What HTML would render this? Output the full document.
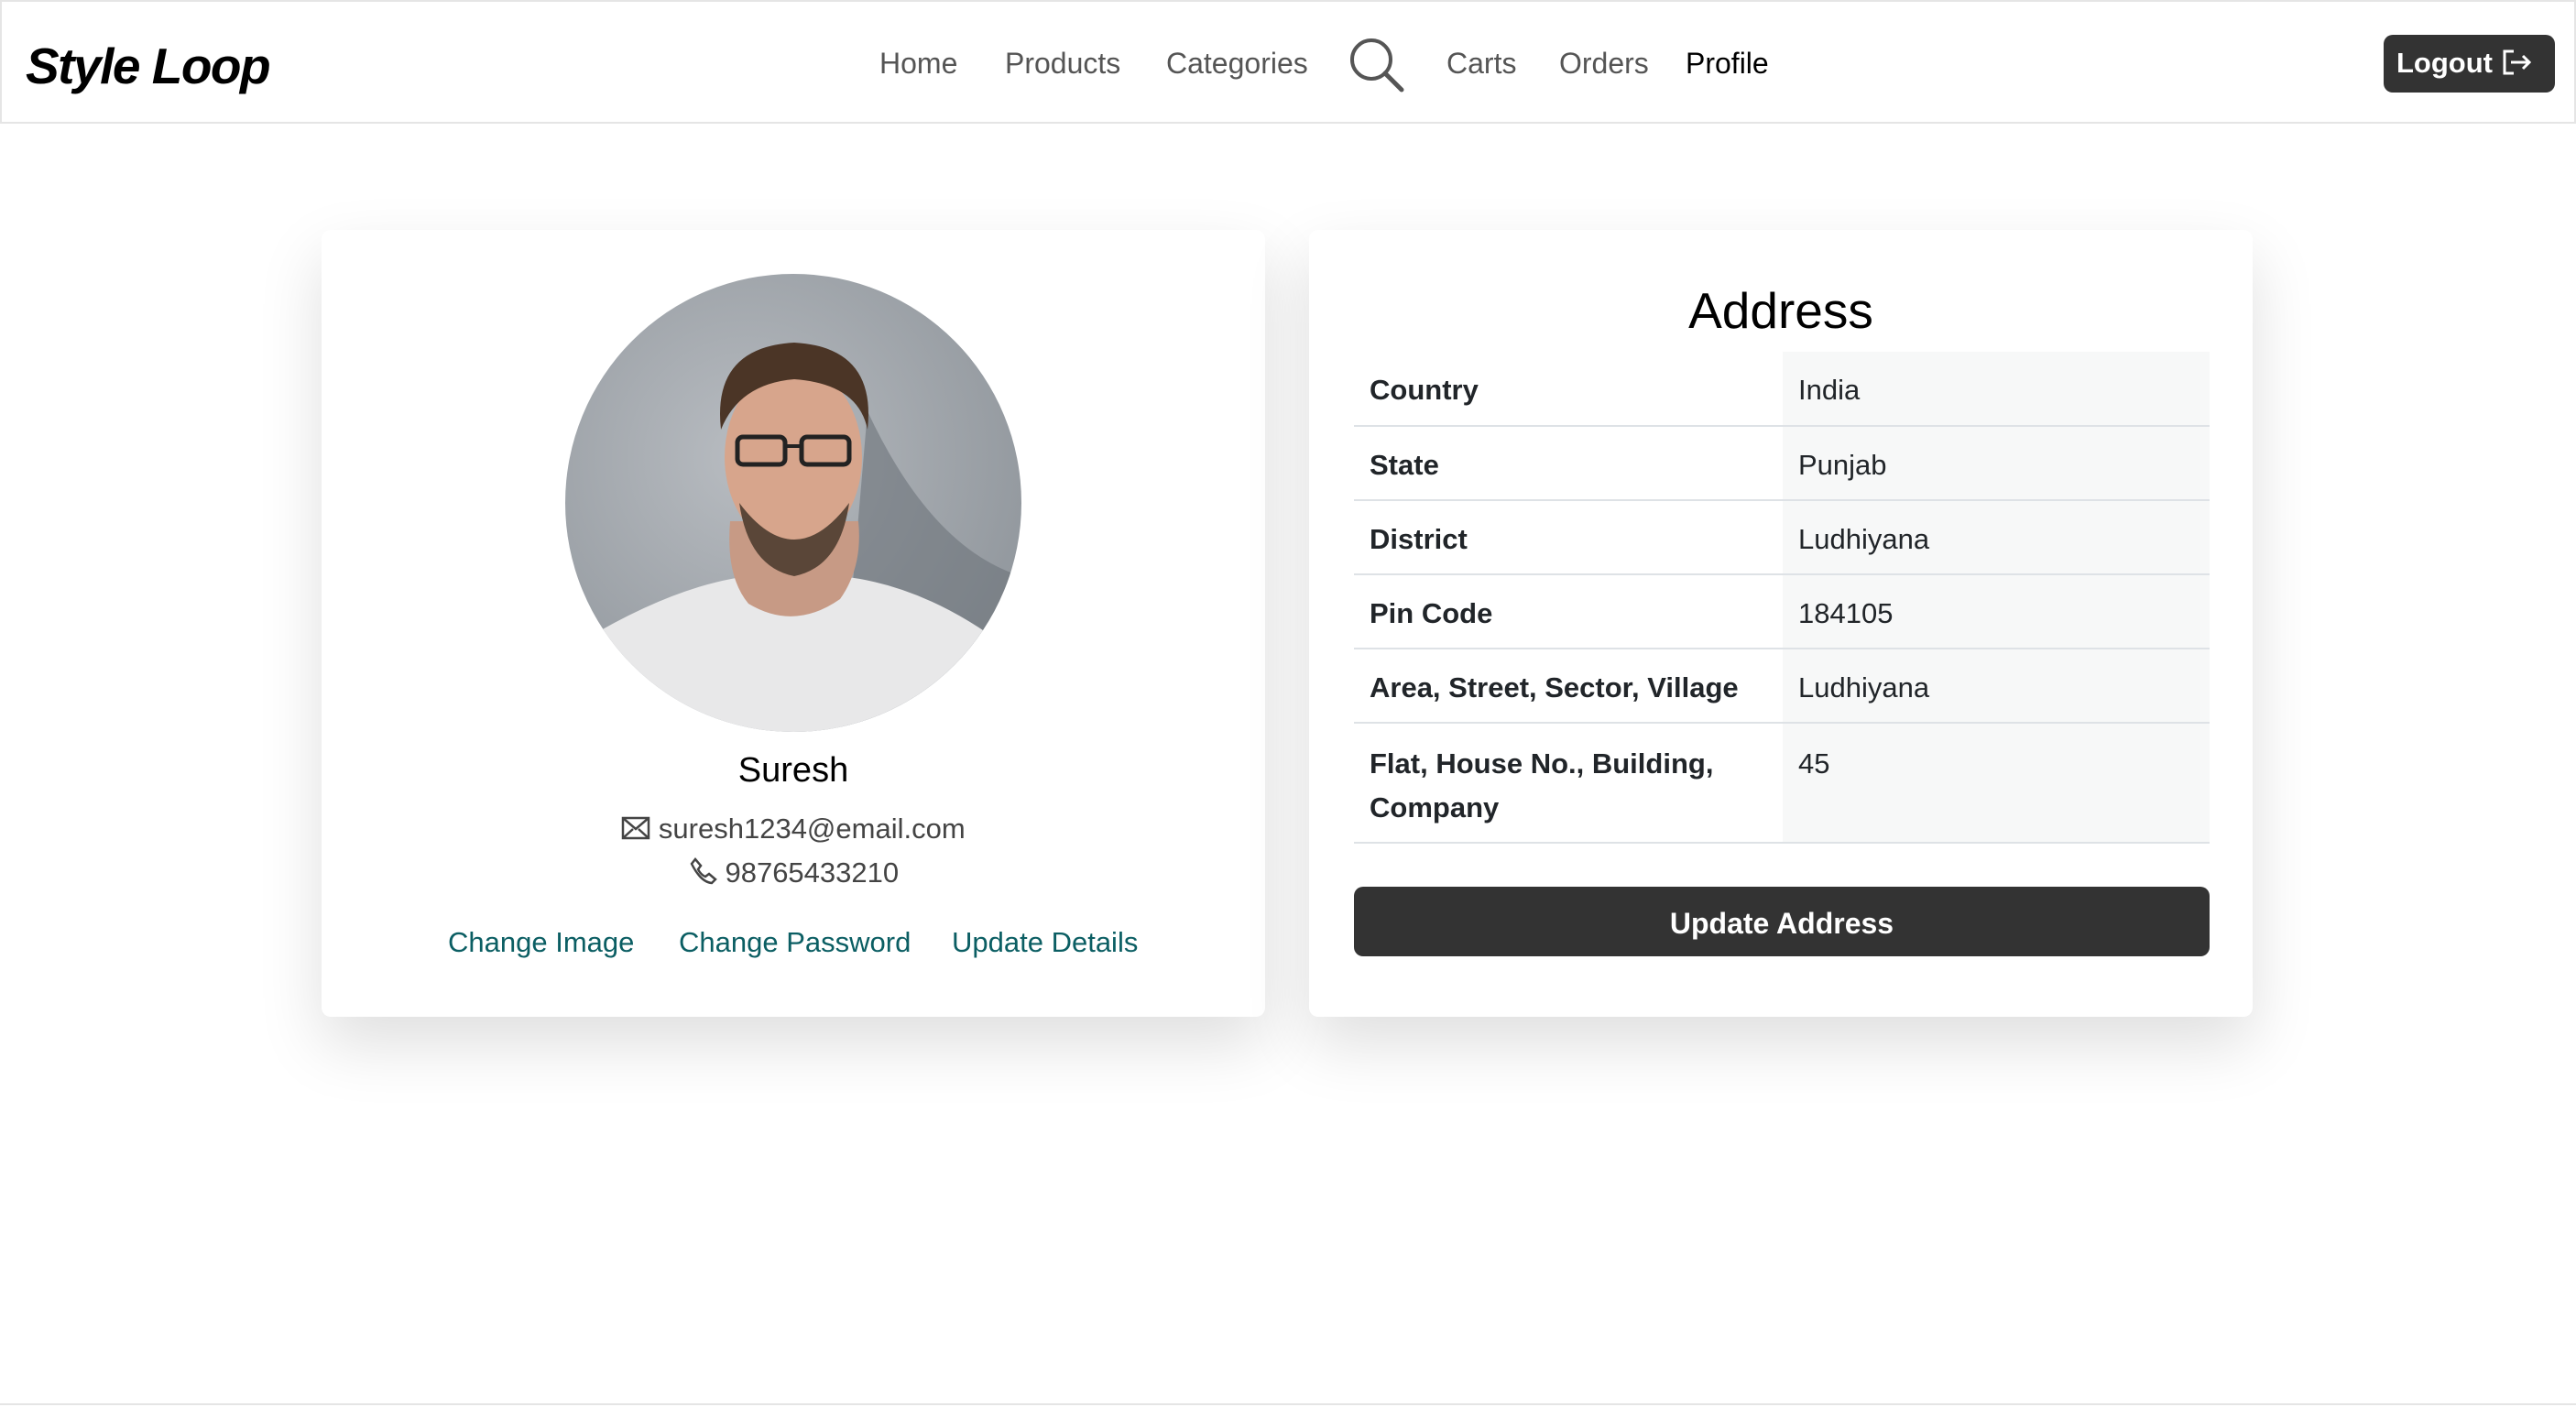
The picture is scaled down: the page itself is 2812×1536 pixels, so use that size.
<!DOCTYPE html>
<html><head><meta charset="utf-8"><style>
*{box-sizing:border-box;margin:0;padding:0}
body{width:2812px;height:1536px;background:#fff;font-family:"Liberation Sans",sans-serif;position:relative;overflow:hidden;color:#212529}
.nav{position:absolute;left:0;top:0;width:2812px;height:135px;border:2px solid #e5e5e5;background:#fff}
.logo{position:absolute;left:26px;top:38px;font-size:55px;font-weight:bold;font-style:italic;color:#000;letter-spacing:-1.5px}
.links{position:absolute;top:49px;font-size:32px;color:#555}
.links span{position:absolute;white-space:nowrap}
.logout{position:absolute;left:2600px;top:36px;width:187px;height:63px;background:#333;border-radius:10px;color:#fff;font-weight:bold;font-size:31px;padding:13px 0 0 14px}
.card{position:absolute;top:251px;width:1030px;height:859px;background:#fff;border-radius:10px;box-shadow:0 30px 70px rgba(0,0,0,.13)}
.center{position:absolute;left:0;width:100%;text-align:center}
table{position:absolute;left:49px;top:133px;width:934px;border-collapse:collapse;font-size:31px}
td{border-bottom:2px solid #dee2e6;padding:4px 17px 0;height:81px;vertical-align:middle}
td:first-child{font-weight:bold;width:468px}
td:last-child{background:#f7f8f8}
tr.tall td{height:131px;vertical-align:top;padding-top:20px;line-height:48px}
.btn{position:absolute;left:49px;top:717px;width:934px;height:76px;background:#333;border-radius:10px;color:#fff;font-weight:bold;font-size:32px;text-align:center;line-height:80px}
.teal{color:#0b5e63}
</style></head><body>
<div class="nav">
<div class="logo">Style Loop</div>
<div class="links">
<span style="left:958px">Home</span>
<span style="left:1095px">Products</span>
<span style="left:1271px">Categories</span>
<span style="left:1577px">Carts</span>
<span style="left:1700px">Orders</span>
<span style="left:1838px;color:#000">Profile</span>
</div>
<svg style="position:absolute;left:1470px;top:38px" width="62" height="62" viewBox="0 0 62 62"><circle cx="25" cy="25" r="21" fill="none" stroke="#555" stroke-width="4"/><line x1="40" y1="40" x2="58" y2="58" stroke="#555" stroke-width="5" stroke-linecap="round"/></svg>
<div class="logout">Logout <svg width="34" height="30" viewBox="0 0 34 30" style="vertical-align:-4px"><path d="M14 3H4v24h10M11 15h20M24 8l7 7-7 7" fill="none" stroke="#fff" stroke-width="3"/></svg></div>
</div>

<div class="card" style="left:351px">
<svg style="position:absolute;left:266px;top:48px" width="498" height="500" viewBox="0 0 498 500">
<defs><clipPath id="c"><ellipse cx="249" cy="250" rx="249" ry="250"/></clipPath>
<radialGradient id="bg" cx=".4" cy=".4" r=".7"><stop offset="0" stop-color="#b8bcc1"/><stop offset="1" stop-color="#8f959b"/></radialGradient></defs>
<g clip-path="url(#c)">
<rect width="498" height="500" fill="url(#bg)"/>
<path d="M330 150 Q400 300 498 330 L498 500 L300 500Z" fill="#6d7379" opacity=".6"/>
<path d="M20 400 Q120 340 200 330 L300 330 Q400 340 498 420 L498 500 L0 500Z" fill="#e8e8e9"/>
<path d="M180 270 Q175 330 200 360 Q250 390 300 355 Q325 320 320 270Z" fill="#c79a85"/>
<ellipse cx="249" cy="200" rx="75" ry="100" fill="#d7a58c"/>
<path d="M170 170 Q160 80 250 75 Q340 80 330 170 Q320 120 250 115 Q190 120 170 170Z" fill="#4b3526"/>
<path d="M190 250 Q250 330 310 250 Q300 320 250 330 Q200 320 190 250Z" fill="#5a4638"/>
<rect x="188" y="178" width="52" height="30" rx="6" fill="none" stroke="#222" stroke-width="5"/>
<rect x="258" y="178" width="52" height="30" rx="6" fill="none" stroke="#222" stroke-width="5"/>
<line x1="240" y1="188" x2="258" y2="188" stroke="#222" stroke-width="4"/>
</g></svg>
<div class="center" style="top:569px;font-size:38px;color:#000">Suresh</div>
<div class="center" style="top:636px;font-size:31px;color:#444"><svg width="32" height="26" viewBox="0 0 32 26" style="vertical-align:-2px"><rect x="2" y="2" width="28" height="22" fill="none" stroke="#444" stroke-width="2.5"/><path d="M2 2l14 12L30 2M2 24l11-10M30 24L19 14" fill="none" stroke="#444" stroke-width="2.5"/></svg> suresh1234@email.com</div>
<div class="center" style="top:684px;font-size:31px;color:#444"><svg width="32" height="32" viewBox="0 0 32 32" style="vertical-align:-4px"><path d="M8 3l6 7-3 4q3 6 8 8l4-3 7 6-4 4Q14 28 4 8Z" fill="none" stroke="#444" stroke-width="2.5"/></svg> 98765433210</div>
<div class="teal" style="position:absolute;top:760px;left:138px;font-size:31px;white-space:nowrap">Change Image</div>
<div class="teal" style="position:absolute;top:760px;left:390px;font-size:31px;white-space:nowrap">Change Password</div>
<div class="teal" style="position:absolute;top:760px;left:688px;font-size:31px;white-space:nowrap">Update Details</div>
</div>

<div class="card" style="left:1429px">
<div class="center" style="top:56px;font-size:55px;color:#000">Address</div>
<table>
<tr><td>Country</td><td>India</td></tr>
<tr><td>State</td><td>Punjab</td></tr>
<tr><td>District</td><td>Ludhiyana</td></tr>
<tr><td>Pin Code</td><td>184105</td></tr>
<tr><td>Area, Street, Sector, Village</td><td>Ludhiyana</td></tr>
<tr class="tall"><td>Flat, House No., Building, Company</td><td>45</td></tr>
</table>
<div class="btn">Update Address</div>
</div>
<div style="position:absolute;left:0;top:1532px;width:2812px;height:2px;background:#e5e5e5"></div>
</body></html>
